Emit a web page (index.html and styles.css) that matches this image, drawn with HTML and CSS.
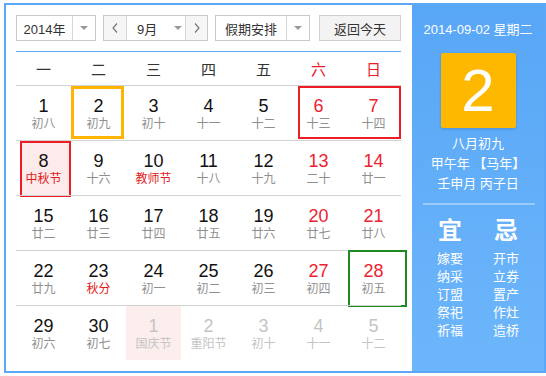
FILE: index.html
```html
<!DOCTYPE html>
<html lang="zh">
<head>
<meta charset="utf-8">
<link rel="stylesheet" href="styles.css">
</head>
<body>
<div class="cal">
  <div class="main">
    <div class="toolbar">
      <div class="select year">
        <span class="val">2014年</span>
        <span class="caret-box"><i class="caret"></i></span>
      </div>
      <div class="select month">
        <span class="nav"><svg width="6" height="10" viewBox="0 0 6 10"><polyline points="5,0.5 1,5 5,9.5" fill="none" stroke="#777" stroke-width="1.2"/></svg></span>
        <span class="mval"><span>9月</span><i class="caret"></i></span>
        <span class="nav next"><svg width="6" height="10" viewBox="0 0 6 10"><polyline points="1,0.5 5,5 1,9.5" fill="none" stroke="#777" stroke-width="1.2"/></svg></span>
      </div>
      <div class="select holiday">
        <span class="val">假期安排</span>
        <span class="caret-box"><i class="caret"></i></span>
      </div>
      <div class="btn">返回今天</div>
    </div>
    <div class="weekdays">
      <span>一</span><span>二</span><span>三</span><span>四</span><span>五</span><span class="we">六</span><span class="we">日</span>
    </div>
    <div class="days">
      <div class="d"><b>1</b><s>初八</s></div>
      <div class="d today"><b>2</b><s>初九</s></div>
      <div class="d"><b>3</b><s>初十</s></div>
      <div class="d"><b>4</b><s>十一</s></div>
      <div class="d"><b>5</b><s>十二</s></div>
      <div class="d we rest"><b>6</b><s>十三</s></div>
      <div class="d we"><b>7</b><s>十四</s></div>

      <div class="d fest"><b>8</b><s class="hol">中秋节</s></div>
      <div class="d"><b>9</b><s>十六</s></div>
      <div class="d"><b>10</b><s class="hol">教师节</s></div>
      <div class="d"><b>11</b><s>十八</s></div>
      <div class="d"><b>12</b><s>十九</s></div>
      <div class="d we"><b>13</b><s>二十</s></div>
      <div class="d we"><b>14</b><s>廿一</s></div>

      <div class="d"><b>15</b><s>廿二</s></div>
      <div class="d"><b>16</b><s>廿三</s></div>
      <div class="d"><b>17</b><s>廿四</s></div>
      <div class="d"><b>18</b><s>廿五</s></div>
      <div class="d"><b>19</b><s>廿六</s></div>
      <div class="d we"><b>20</b><s>廿七</s></div>
      <div class="d we"><b>21</b><s>廿八</s></div>

      <div class="d"><b>22</b><s>廿九</s></div>
      <div class="d"><b>23</b><s class="hol">秋分</s></div>
      <div class="d"><b>24</b><s>初一</s></div>
      <div class="d"><b>25</b><s>初二</s></div>
      <div class="d"><b>26</b><s>初三</s></div>
      <div class="d we"><b>27</b><s>初四</s></div>
      <div class="d we work"><b>28</b><s>初五</s></div>

      <div class="d"><b>29</b><s>初六</s></div>
      <div class="d"><b>30</b><s>初七</s></div>
      <div class="d other pink"><b>1</b><s>国庆节</s></div>
      <div class="d other"><b>2</b><s>重阳节</s></div>
      <div class="d other"><b>3</b><s>初十</s></div>
      <div class="d other"><b>4</b><s>十一</s></div>
      <div class="d other"><b>5</b><s>十二</s></div>
    </div>
  </div>
  <div class="side">
    <div class="sdate">2014-09-02 星期二</div>
    <div class="big">2</div>
    <div class="lunar">
      <div>八月初九</div>
      <div>甲午年 【马年】</div>
      <div>壬申月 丙子日</div>
    </div>
    <div class="sep"></div>
    <div class="yiji">
      <div class="col">
        <div class="head">宜</div>
        <div>嫁娶</div><div>纳采</div><div>订盟</div><div>祭祀</div><div>祈福</div>
      </div>
      <div class="col">
        <div class="head">忌</div>
        <div>开市</div><div>立券</div><div>置产</div><div>作灶</div><div>造桥</div>
      </div>
    </div>
  </div>
</div>
</body>
</html>
```
FILE: styles.css
```css
* { box-sizing: border-box; }
body {
  margin: 0;
  background: #fff;
  font-family: "Liberation Sans", "Noto Sans CJK SC", sans-serif;
}
.cal {
  margin: 3px 0 0 4px;
  width: 542px;
  height: 370px;
  border: 2px solid #5aa8f6;
  display: flex;
}
.main {
  width: 406px;
  padding: 10px 11px 0 10px;
}
.toolbar {
  display: flex;
  height: 26px;
  gap: 7px;
  margin-bottom: 10px;
}
.select {
  display: flex;
  height: 26px;
  border: 1px solid #c9c9c9;
  background: #fff;
  font-size: 13px;
  color: #333;
}
.val {
  display: flex;
  align-items: center;
  justify-content: center;
}
.year .val { width: 55px; }
.holiday .val { width: 70px; }
.caret-box {
  width: 23px;
  border-left: 1px solid #d6d6d6;
  display: flex;
  align-items: center;
  justify-content: center;
}
.caret {
  display: block;
  width: 0;
  height: 0;
  border-left: 4px solid transparent;
  border-right: 4px solid transparent;
  border-top: 4px solid #9a9a9a;
}
.nav {
  width: 22px;
  background: #f6f6f6;
  display: flex;
  align-items: center;
  justify-content: center;
}
.nav svg { display: block; }
.nav.next { border-left: 1px solid #d6d6d6; }
.mval {
  width: 59px;
  border-left: 1px solid #d6d6d6;
  display: flex;
  align-items: center;
  padding-left: 10px;
  gap: 17px;
}
.btn {
  margin-left: 2px;
  width: 82px;
  height: 26px;
  border: 1px solid #cfcfcf;
  background: #f3f3f3;
  font-size: 13px;
  color: #333;
  display: flex;
  align-items: center;
  justify-content: center;
}
.weekdays {
  border-top: 1px solid #5aa8f6;
  height: 34px;
  display: grid;
  grid-template-columns: repeat(7, 55px);
  align-items: center;
  text-align: center;
  font-size: 15px;
  color: #333;
}
.weekdays .we { color: #e8202a; }
.days {
  display: grid;
  grid-template-columns: repeat(7, 55px);
  grid-auto-rows: 55px;
}
.d {
  border-top: 1px solid #d2d2d2;
  padding-top: 10px;
  display: flex;
  flex-direction: column;
  align-items: center;
  position: relative;
  z-index: 0;
}
.d:nth-child(n+29) { }
.d b {
  font-weight: normal;
  font-size: 18px;
  line-height: 20px;
  color: #111;
}
.d s {
  text-decoration: none;
  font-size: 12px;
  line-height: 17px;
  color: #8f8f8f;
}
.d.we b { color: #ee2230; }
.d s.hol { color: #e31a1a; }
.d.other b, .d.other s { color: #c4c4c4; }
.d.pink { background: #fdeeee; border-top-color: #d2d2d2; }

.today::after {
  content: "";
  position: absolute;
  top: 0; left: 0; right: 2px; bottom: 1px;
  border: 3px solid #ffb400;
  z-index: -1;
}
.rest::after {
  content: "";
  position: absolute;
  top: 0; left: 7px; right: -55px; bottom: 1px;
  border: 2px solid #ee1c24;
  z-index: -1;
}
.fest::after {
  content: "";
  position: absolute;
  top: 0; left: 4px; right: 0; bottom: -2px;
  border: 2px solid #ee1c24;
  background: #fdeaea;
  z-index: -1;
}
.work::after {
  content: "";
  position: absolute;
  top: -1px; left: 2px; right: -6px; bottom: -2px;
  border: 2px solid #1f8a22;
  z-index: -1;
}

.side {
  width: 132px;
  background: linear-gradient(#58a6f6, #6db6fb);
  color: #fff;
  text-align: center;
  padding-top: 15px;
  font-size: 13px;
}
.sdate { line-height: 20px; }
.big {
  margin: 13px auto 0;
  width: 75px;
  height: 75px;
  background: #ffb800;
  border-radius: 2px;
  box-shadow: 0 1px 3px rgba(0, 0, 0, 0.18);
  font-size: 60px;
  line-height: 75px;
}
.lunar {
  margin-top: 6px;
  line-height: 20px;
}
.sep {
  margin: 9px 9px 0 11px;
  height: 2px;
  background: rgba(255, 255, 255, 0.35);
}
.yiji {
  display: flex;
  justify-content: center;
  margin-top: 11px;
}
.col {
  width: 56px;
  line-height: 18px;
}
.col .head {
  font-size: 24px;
  font-weight: bold;
  line-height: 30px;
  margin-bottom: 4px;
}
```
